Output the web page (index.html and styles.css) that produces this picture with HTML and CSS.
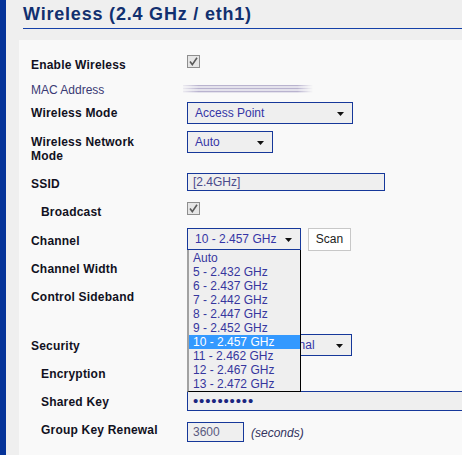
FILE: index.html
```html
<!DOCTYPE html>
<html>
<head>
<meta charset="utf-8">
<title>Wireless</title>
<link rel="stylesheet" href="styles.css">
</head>
<body>
<div class="page">
  <div class="sidebar"></div>
  <div class="main">
    <h1 class="title">Wireless (2.4 GHz / eth1)</h1>
    <div class="panel">
      <div class="row h25">
        <div class="label">Enable Wireless</div>
        <div class="ctl top3"><svg class="check" width="13" height="13" viewBox="0 0 13 13"><rect x="0.5" y="0.5" width="12" height="12" fill="#e6e6e6" stroke="#8e8e8e"/><path d="M3 6.5 L5.3 9.6 L10 2.8" fill="none" stroke="#5a5a5a" stroke-width="1.6"/></svg></div>
      </div>
      <div class="row h23">
        <div class="label plain">MAC Address</div>
        <div class="ctl top8"><div class="mac"></div></div>
      </div>
      <div class="row h29">
        <div class="label">Wireless Mode</div>
        <div class="ctl"><div class="select w166"><span>Access Point</span><svg class="arrow" width="7" height="4" viewBox="0 0 7 4"><path d="M0 0 H7 L3.5 4 Z" fill="#111"/></svg></div></div>
      </div>
      <div class="row h42">
        <div class="label">Wireless Network<br>Mode</div>
        <div class="ctl"><div class="select w86"><span>Auto</span><svg class="arrow" width="7" height="4" viewBox="0 0 7 4"><path d="M0 0 H7 L3.5 4 Z" fill="#111"/></svg></div></div>
      </div>
      <div class="row h28">
        <div class="label">SSID</div>
        <div class="ctl"><div class="input ssid">[2.4GHz]</div></div>
      </div>
      <div class="row h29">
        <div class="label sub">Broadcast</div>
        <div class="ctl top3"><svg class="check" width="13" height="13" viewBox="0 0 13 13"><rect x="0.5" y="0.5" width="12" height="12" fill="#e6e6e6" stroke="#8e8e8e"/><path d="M3 6.5 L5.3 9.6 L10 2.8" fill="none" stroke="#5a5a5a" stroke-width="1.6"/></svg></div>
      </div>
      <div class="row h28">
        <div class="label">Channel</div>
        <div class="ctl top0 channel">
          <div class="select-wrap">
            <div class="select w114"><span>10 - 2.457 GHz</span><svg class="arrow" width="7" height="4" viewBox="0 0 7 4"><path d="M0 0 H7 L3.5 4 Z" fill="#111"/></svg></div>
            <ul class="dropdown">
              <li>Auto</li>
              <li>5 - 2.432 GHz</li>
              <li>6 - 2.437 GHz</li>
              <li>7 - 2.442 GHz</li>
              <li>8 - 2.447 GHz</li>
              <li>9 - 2.452 GHz</li>
              <li class="selected">10 - 2.457 GHz</li>
              <li>11 - 2.462 GHz</li>
              <li>12 - 2.467 GHz</li>
              <li>13 - 2.472 GHz</li>
            </ul>
          </div>
          <div class="button">Scan</div>
        </div>
      </div>
      <div class="row h28">
        <div class="label">Channel Width</div>
        <div class="ctl"></div>
      </div>
      <div class="row h49">
        <div class="label">Control Sideband</div>
        <div class="ctl"></div>
      </div>
      <div class="row h28">
        <div class="label">Security</div>
        <div class="ctl top1"><div class="select w165"><span>WPA / WPA2 Personal</span><svg class="arrow" width="7" height="4" viewBox="0 0 7 4"><path d="M0 0 H7 L3.5 4 Z" fill="#111"/></svg></div></div>
      </div>
      <div class="row h28">
        <div class="label sub">Encryption</div>
        <div class="ctl"></div>
      </div>
      <div class="row h28">
        <div class="label sub">Shared Key</div>
        <div class="ctl"><div class="input key">••••••••••</div></div>
      </div>
      <div class="row h28">
        <div class="label sub">Group Key Renewal</div>
        <div class="ctl group"><div class="input renew">3600</div><span class="note">(seconds)</span></div>
      </div>
    </div>
  </div>
</div>
</body>
</html>
```

FILE: styles.css
```css
html, body {
  margin: 0;
  padding: 0;
  background: #efefef;
  font-family: "Liberation Sans", Arial, sans-serif;
  font-size: 12px;
  line-height: 14px;
  overflow: hidden;
}

.page {
  display: flex;
  height: 455px;
  overflow: hidden;
}

.sidebar {
  width: 6px;
  flex: none;
  background: #053399;
}

.main {
  flex: 1;
  min-width: 0;
  padding-left: 13px;
}

.title {
  margin: 3px 0 0 4px;
  padding: 0 0 3px 0;
  height: 22px;
  line-height: 22px;
  font-size: 18px;
  letter-spacing: 0.8px;
  font-weight: bold;
  color: #12306f;
  border-bottom: 1px solid #1540a8;
}

.panel {
  margin-top: 11px;
  background: #f9f9f9;
  padding: 12px 0 10px 12px;
}

.row {
  display: grid;
  grid-template-columns: 156px 1fr;
}

.h23 { height: 23px; }
.h25 { height: 25px; }
.h28 { height: 28px; }
.h29 { height: 29px; }
.h42 { height: 42px; }
.h49 { height: 49px; }

.label {
  padding-top: 6px;
  font-weight: bold;
  letter-spacing: 0.2px;
  color: #111122;
}

.label.plain {
  font-weight: normal;
  letter-spacing: 0;
  color: #3a3a74;
}

.label.sub {
  padding-left: 10px;
}

.ctl {
  padding-top: 2px;
  min-width: 0;
}

.ctl.top0 { padding-top: 0; }
.ctl.top1 { padding-top: 1px; }
.ctl.top3 { padding-top: 3px; }
.ctl.top8 { padding-top: 8px; }

.check {
  display: block;
}

.mac {
  margin-left: -4px;
  width: 130px;
  height: 8px;
  background: repeating-linear-gradient(to bottom, #b9b3cf 0, #b9b3cf 1px, #e4e2ec 1px, #e4e2ec 3px);
  -webkit-mask-image: linear-gradient(to right, rgba(0,0,0,0.2) 0, #000 12%, #000 88%, rgba(0,0,0,0) 100%);
  mask-image: linear-gradient(to right, rgba(0,0,0,0.2) 0, #000 12%, #000 88%, rgba(0,0,0,0) 100%);
  filter: blur(0.5px);
}

.select {
  box-sizing: border-box;
  height: 22px;
  display: flex;
  align-items: center;
  justify-content: space-between;
  border: 1px solid #16389a;
  background: #efefef;
  color: #3535a6;
  padding: 0 8px 0 7px;
  white-space: nowrap;
  overflow: hidden;
}

.w166 { width: 166px; }
.w165 { width: 165px; }
.w114 { width: 114px; }
.w86 { width: 86px; }

.arrow {
  flex: none;
  display: block;
  margin-top: 1px;
}

.input {
  box-sizing: border-box;
  border: 1px solid #16389a;
  background: #efefef;
  color: #4a4a8c;
  padding: 0 5px;
  white-space: nowrap;
}

.ssid {
  width: 198px;
  height: 18px;
  line-height: 16px;
}

.key {
  width: 100%;
  height: 20px;
  line-height: 18px;
  border-right: none;
  color: #1a2680;
  font-size: 15px;
  letter-spacing: 0.85px;
}

.renew {
  width: 57px;
  height: 20px;
  line-height: 18px;
  color: #5a5a80;
}

.group {
  display: flex;
  align-items: center;
  gap: 7px;
}

.note {
  font-style: italic;
  color: #33335e;
  padding-top: 1px;
}

.channel {
  display: flex;
  align-items: flex-start;
  gap: 7px;
}

.select-wrap {
  position: relative;
}

.dropdown {
  position: absolute;
  top: 22px;
  left: 0;
  z-index: 10;
  box-sizing: border-box;
  width: 114px;
  margin: 0;
  padding: 1px 0 0 0;
  list-style: none;
  background: #efefef;
  border-left: 2px solid #a2a2a2;
  border-right: 1px solid #000;
  border-bottom: 1px solid #000;
  color: #36369e;
}

.dropdown li {
  height: 14px;
  line-height: 14px;
  padding-left: 4px;
  white-space: nowrap;
}

.dropdown li.selected {
  background: #3399ff;
  color: #fff;
}

.button {
  box-sizing: border-box;
  width: 43px;
  height: 23px;
  line-height: 21px;
  text-align: center;
  border: 1px solid #c8c8c8;
  background: #ffffff;
  color: #222;
}
```
